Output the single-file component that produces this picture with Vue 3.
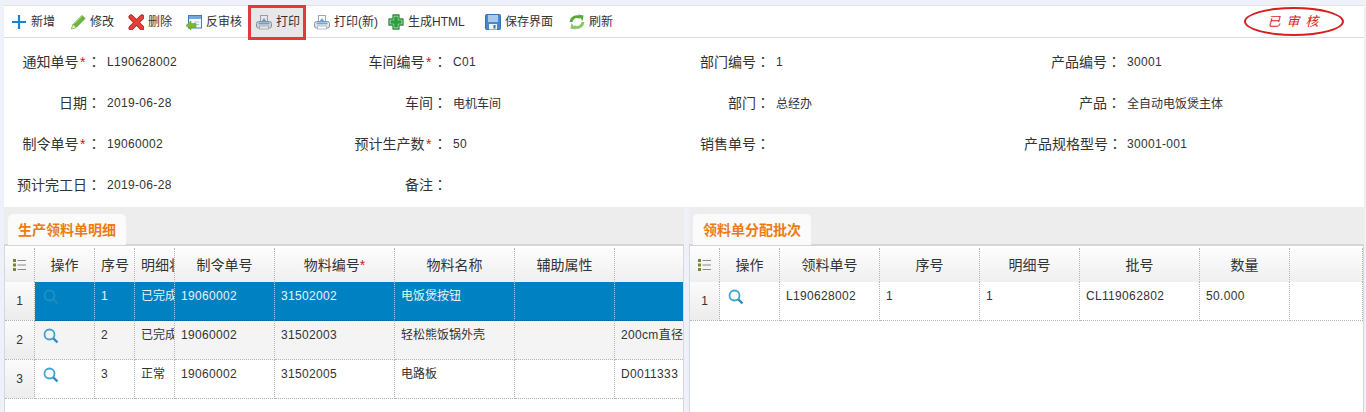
<script setup>
const tools = [
  { icon: 'plus', text: '新增', width: 59 },
  { icon: 'pencil', text: '修改', width: 58 },
  { icon: 'del', text: '删除', width: 58 },
  { icon: 'audit', text: '反审核', width: 70 },
  { icon: 'print', text: '打印', width: 58, active: true },
  { icon: 'print', text: '打印(新)', width: 74 },
  { icon: 'cross', text: '生成HTML', width: 97 },
  { icon: 'save', text: '保存界面', width: 84 },
  { icon: 'refresh', text: '刷新', width: 60 }
]

const fields = [
  { label: '通知单号', req: true, value: 'L190628002' },
  { label: '车间编号', req: true, value: 'C01' },
  { label: '部门编号', value: '1' },
  { label: '产品编号', value: '30001' },
  { label: '日期', value: '2019-06-28' },
  { label: '车间', value: '电机车间' },
  { label: '部门', value: '总经办' },
  { label: '产品', value: '全自动电饭煲主体' },
  { label: '制令单号', req: true, value: '19060002' },
  { label: '预计生产数', req: true, value: '50' },
  { label: '销售单号', value: '' },
  { label: '产品规格型号', value: '30001-001' },
  { label: '预计完工日', value: '2019-06-28' },
  { label: '备注', value: '' }
]

const tables = [
  {
    title: '生产领料单明细',
    cls: 'left',
    widths: [30, 60, 40, 40, 100, 120, 120, 100, 68],
    head: ['操作', '序号', '明细状态', '制令单号', '物料编号', '物料名称', '辅助属性', ''],
    reqCol: 4,
    rows: [
      { selected: true, cells: ['1', '已完成', '19060002', '31502002', '电饭煲按钮', '', ''] },
      { alt: true, cells: ['2', '已完成', '19060002', '31502003', '轻松熊饭锅外壳', '', '200cm直径'] },
      { cells: ['3', '正常', '19060002', '31502005', '电路板', '', 'D0011333'] }
    ]
  },
  {
    title: '领料单分配批次',
    cls: 'right',
    widths: [30, 60, 100, 100, 100, 120, 90, 73],
    head: ['操作', '领料单号', '序号', '明细号', '批号', '数量', ''],
    reqCol: -1,
    rows: [
      { cells: ['L190628002', '1', '1', 'CL119062802', '50.000', ''] }
    ]
  }
]

const isCjk = (v) => /^[^\x00-\x7f]+$/.test(v)
const columns = (t) => t.widths.map((w) => w + 'px').join(' ')
</script>

<template>
  <div class="page">
    <div class="toolbar">
      <div
        v-for="t in tools"
        :key="t.text"
        class="tool"
        :class="{ active: t.active }"
        :style="{ width: t.width + 'px' }"
      >
        <svg class="ico" width="16" height="16" viewBox="0 0 16 16">
          <template v-if="t.icon === 'plus'">
            <path d="M8 1v14M1 8h14" stroke="#1b84c8" stroke-width="2.2" fill="none" />
          </template>
          <template v-else-if="t.icon === 'pencil'">
            <path d="M1.500 15l1.500-4.500L12 1.500l3 3-9 9z" fill="#6db53b" stroke="#4d8f28" stroke-width=".8" />
            <path d="M4 10l8-8" stroke="#a8d878" />
            <path d="M1.500 15L3 10.500l3 3z" fill="#d8e8b0" />
          </template>
          <template v-else-if="t.icon === 'del'">
            <path d="M3 3l11 11M14 3L3 14" stroke="#a82320" stroke-width="5" stroke-linecap="round" />
            <path d="M3 3l11 11M14 3L3 14" stroke="#e5403a" stroke-width="3.400" stroke-linecap="round" />
          </template>
          <template v-else-if="t.icon === 'audit'">
            <rect x="2.500" y="1.500" width="13" height="12.500" fill="#f4f8fc" stroke="#3b7fb5" />
            <rect x="3" y="2" width="12" height="3" fill="#6fa9d8" />
            <path d="M8 8h5M8 10.500h5" stroke="#a8c4dc" />
            <path d="M0 11.500l5-4.500v2.500h5v4H5V16z" fill="#7db82c" stroke="#5b9420" stroke-width=".5" />
          </template>
          <template v-else-if="t.icon === 'print'">
            <rect x="4.500" y="1.500" width="7" height="7" fill="#fff" stroke="#9aa8b8" />
            <path d="M5 8l3-4 3 4z" fill="#6aa6e0" />
            <rect x=".5" y="7.500" width="15" height="6.500" rx="2" fill="#e4e8ef" stroke="#8795a6" />
            <rect x="2.500" y="8.500" width="11" height="1.800" fill="#6aa6e0" />
            <rect x="3.500" y="12" width="9" height="3" fill="#fff" stroke="#a4b0be" stroke-width=".8" />
          </template>
          <template v-else-if="t.icon === 'cross'">
            <path d="M5 1h6v4h4v6h-4v4H5v-4H1V5h4z" fill="#c4e8c6" stroke="#2f8a3e" stroke-width="1.300" stroke-linejoin="round" />
            <path d="M6.200 2.500h3.600v3.700h3.700v3.600H9.800v3.700H6.200V9.800H2.500V6.200h3.700z" fill="#27a03c" />
          </template>
          <template v-else-if="t.icon === 'save'">
            <rect x=".5" y=".5" width="15" height="15" rx="1" fill="#4a86cf" stroke="#3a6fb2" />
            <rect x="3" y="1" width="10" height="7" fill="#a9c8ea" />
            <rect x="4" y="10" width="8" height="5.500" fill="#eef2f8" />
            <rect x="8.500" y="11" width="2" height="3.500" fill="#3f6fa8" />
          </template>
          <template v-else>
            <path d="M2 8A6 6 0 0 1 11 3.500" stroke="#58a83a" stroke-width="2.800" fill="none" />
            <path d="M9 .5l5.500 1-1 5.500z" fill="#58a83a" />
            <path d="M14 8A6 6 0 0 1 5 12.500" stroke="#88c468" stroke-width="2.800" fill="none" />
            <path d="M7 15.500l-5.500-1 1-5.500z" fill="#88c468" />
          </template>
        </svg>
        <span class="tool-text">{{ t.text }}</span>
      </div>
      <div class="stamp"><span>已审核</span></div>
    </div>

    <div class="form">
      <div v-for="f in fields" :key="f.label" class="field">
        <div class="label">{{ f.label }}<i v-if="f.req" class="star form-star">*</i><span class="colon">：</span></div>
        <div class="value" :class="{ cjk: isCjk(f.value) }">{{ f.value }}</div>
      </div>
    </div>

    <div class="panels">
      <div v-for="t in tables" :key="t.title" class="panel" :class="t.cls">
        <div class="band"><div class="tab">{{ t.title }}</div></div>
        <div class="sheet">
          <div class="grid" :style="{ gridTemplateColumns: columns(t) }">
            <div class="hd num">
              <svg width="13" height="12" viewBox="0 0 13 12">
                <path d="M0 0h3v3H0zM0 4.500h3v3H0zM0 9h3v3H0z" fill="#76873a" />
                <path d="M4.500 1.500H13M4.500 6H13M4.500 10.500H13" stroke="#8a8a8a" />
              </svg>
            </div>
            <div v-for="(h, i) in t.head" :key="i" class="hd">
              {{ h }}<i v-if="i === t.reqCol" class="star">*</i>
            </div>
            <template v-for="(r, ri) in t.rows" :key="ri">
              <div class="num cell-num">{{ ri + 1 }}</div>
              <div class="td" :class="{ sel: r.selected, alt: r.alt }">
                <svg class="search" width="16" height="16" viewBox="0 0 16 16">
                  <circle cx="6.500" cy="6.500" r="5" fill="none" :stroke="r.selected ? '#1b93c6' : '#42a2d2'" stroke-width="1.800" />
                  <path d="M10.300 10.300l4.200 4.200" :stroke="r.selected ? '#1b8abd' : '#2f8cbd'" stroke-width="2.400" />
                </svg>
              </div>
              <div
                v-for="(c, ci) in r.cells"
                :key="ci"
                class="td"
                :class="{ sel: r.selected, alt: r.alt, cjk: isCjk(c) }"
              >{{ c }}</div>
            </template>
          </div>
        </div>
      </div>
    </div>
  </div>
</template>

<style scoped>
.page {
  box-sizing: border-box;
  width: 1366px;
  height: 412px;
  padding: 5px 2px 0 4px;
  background: #eef1f7;
  overflow: hidden;
  display: flex;
  flex-direction: column;
  font-family: "Liberation Sans", "Noto Sans CJK SC", sans-serif;
  color: #333;
}
.toolbar {
  box-sizing: border-box;
  height: 33px;
  flex: none;
  display: flex;
  align-items: center;
  padding-left: 3px;
  background: #fff;
  border-bottom: 1px solid #dcdcdc;
  border-top: 1px solid #e4e4e4;
}
.tool {
  box-sizing: border-box;
  position: relative;
  flex: none;
  display: flex;
  align-items: center;
  gap: 4px;
  padding-left: 4px;
  height: 30px;
  font-size: 12px;
  white-space: nowrap;
}
.ico {
  flex: none;
}
.tool-text {
  position: relative;
  z-index: 1;
  padding-bottom: 3px;
}
.tool.active::after {
  content: "";
  position: absolute;
  left: -4px;
  top: -2px;
  width: 58px;
  height: 35px;
  box-sizing: border-box;
  border: 3px solid #e03a3e;
  background: rgba(120, 120, 120, 0.18);
}
.stamp {
  box-sizing: border-box;
  margin-left: auto;
  margin-right: 20px;
  width: 100px;
  height: 29px;
  border: 2.500px solid #d81e1e;
  border-radius: 50%;
  display: flex;
  align-items: center;
  justify-content: center;
  color: #d81e1e;
  font-size: 13px;
  font-style: italic;
  letter-spacing: 6px;
  text-indent: 4px;
  padding-bottom: 2px;
}
.form {
  flex: none;
  box-sizing: border-box;
  height: 169px;
  padding-top: 4px;
  background: #fff;
  display: grid;
  grid-template-columns: 346px 323px 351px 1fr;
  grid-auto-rows: 41px;
}
.field {
  display: flex;
  align-items: center;
}
.label {
  width: 97px;
  flex: none;
  text-align: right;
  font-size: 14px;
  white-space: nowrap;
  padding-bottom: 4px;
}
.colon {
  font-family: "Noto Sans CJK TC", sans-serif;
}
.star {
  font-style: normal;
  color: #d01818;
}
.form-star {
  display: inline-block;
  width: 8.500px;
  text-align: center;
}
.value {
  margin-left: 6px;
  font-size: 12px;
  letter-spacing: 0.33px;
  padding-bottom: 2px;
}
.value.cjk {
  letter-spacing: 0;
}
.panels {
  flex: 1;
  display: flex;
  gap: 5px;
  min-height: 0;
}
.panel {
  display: flex;
  flex-direction: column;
  background: #fff;
}
.panel.left {
  width: 680px;
}
.panel.right {
  width: 675px;
}
.band {
  box-sizing: border-box;
  height: 39px;
  flex: none;
  padding: 7px 0 0 4px;
  background: #ededed;
  border-bottom: 2px solid #d6d6d6;
}
.tab {
  box-sizing: border-box;
  width: 118px;
  height: 31px;
  padding-left: 10px;
  line-height: 32px;
  font-size: 14px;
  font-weight: 700;
  color: #ee7a14;
  background: #fbfbfb;
  border-radius: 5px 5px 0 0;
}
.sheet {
  flex: 1;
  padding-top: 2px;
  border-left: 1px solid #d4d8e0;
  border-right: 1px solid #d4d8e0;
  background: #fff;
  overflow: hidden;
}
.grid {
  display: grid;
  grid-template-rows: 34px repeat(3, 39px);
  justify-content: start;
}
.hd {
  box-sizing: border-box;
  padding: 0 6px;
  line-height: 34px;
  font-size: 14px;
  text-align: center;
  white-space: nowrap;
  overflow: hidden;
  background: linear-gradient(#fdfdfd, #efefef);
  border-right: 1px dotted #b4b4b4;
}
.hd.num {
  padding: 0;
  display: flex;
  align-items: center;
  justify-content: center;
}
.cell-num {
  box-sizing: border-box;
  display: flex;
  align-items: center;
  justify-content: center;
  font-size: 12px;
  background: linear-gradient(#fbfbfb, #ececec);
  border-right: 1px dotted #b4b4b4;
  border-bottom: 1px dotted #b4b4b4;
}
.td {
  box-sizing: border-box;
  padding: 0 0 0 6px;
  line-height: 28px;
  font-size: 12px;
  letter-spacing: 0.33px;
  white-space: nowrap;
  overflow: hidden;
  background: #fff;
  border-right: 1px dotted #b4b4b4;
  border-bottom: 1px dotted #b4b4b4;
}
.td.cjk {
  letter-spacing: 0;
}
.td.alt {
  background: #f4f4f4;
}
.td.sel {
  background: #0081c2;
  color: #e8f4fb;
  border-right-color: #9fd0ea;
  border-bottom-color: #0a5f8c;
}
.search {
  display: block;
  margin: 7px 0 0 2px;
}
.left .grid > :nth-child(9n) {
  border-right: none;
}
</style>
